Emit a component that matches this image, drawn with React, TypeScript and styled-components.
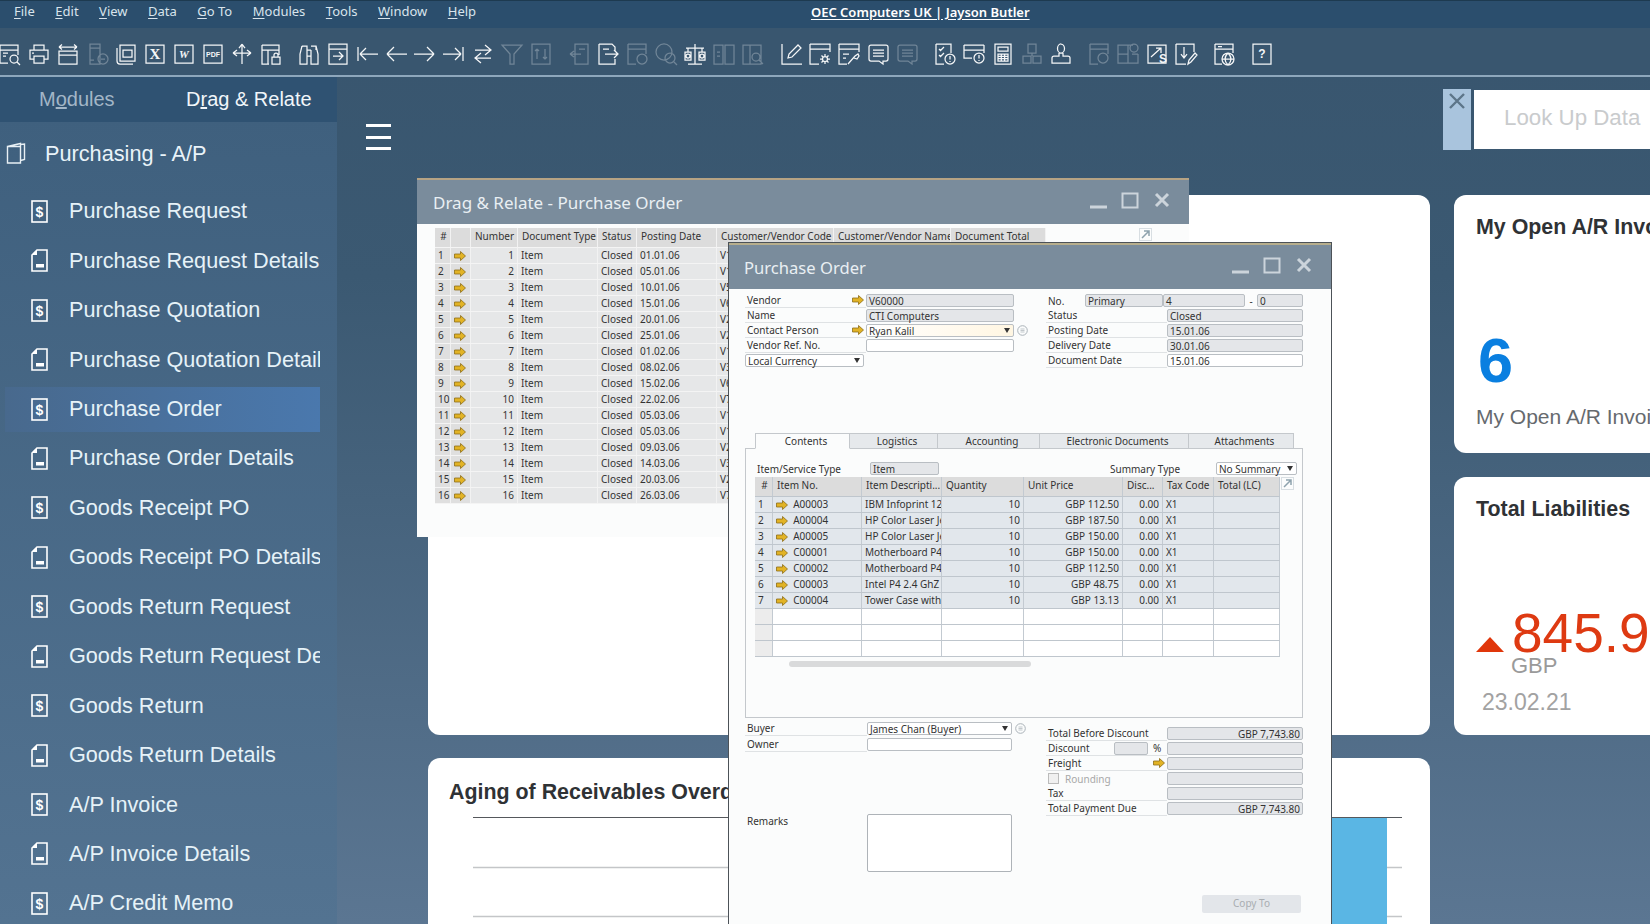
import styled, { createGlobalStyle } from "styled-components";

const GlobalStyle = createGlobalStyle`
  html, body {
    margin: 0;
    padding: 0;
    width: 1650px;
    height: 924px;
    overflow: hidden;
    background: #3a5872;
  }
  * {
    box-sizing: border-box;
  }
`;

const sans = `"Liberation Sans", Arial, sans-serif`;
const ui = `"Noto Sans", "Open Sans", sans-serif`;

const Page = styled.div`
  position: relative;
  width: 1650px;
  height: 924px;
  overflow: hidden;
  display: flex;
  flex-direction: column;
  background: linear-gradient(180deg, #38556e 0%, #3b5972 30%, #5b7692 100%);
  font-family: ${sans};
`;

const MenuBar = styled.div`
  height: 28px;
  flex: none;
  display: flex;
  align-items: center;
  padding: 0 0 7px 14px;
  border-top: 1px solid #1d3a50;
  background: #2b4e6d;
  font-family: ${ui};
  font-size: 13px;
  color: #d9e4ec;
`;

const MenuItem = styled.span`
  margin-right: 20.5px;
  white-space: nowrap;
  u {
    text-underline-offset: 2px;
  }
`;

const CompanyTitle = styled.span`
  position: relative;
  top: 1px;
  margin-left: 314.3px;
  font-weight: 600;
  font-size: 13px;
  color: #ffffff;
  text-decoration: underline;
  text-underline-offset: 2px;
  white-space: nowrap;
`;

const Toolbar = styled.div`
  height: 49px;
  flex: none;
  display: flex;
  align-items: center;
  padding: 5px 0 0 0;
  margin-left: -2px;
  background: #39566f;
  border-bottom: 2px solid #8ea7bc;
`;

const ToolGroup = styled.div`
  display: flex;
  gap: 5px;
  margin-right: 14px;
`;

const ToolSvg = styled.svg<{ $dim?: boolean }>`
  width: 24px;
  height: 24px;
  flex: none;
  fill: none;
  stroke: #ffffff;
  stroke-width: 1.25;
  opacity: ${({ $dim }) => ($dim ? 0.28 : 0.95)};
  text {
    stroke: none;
    fill: #ffffff;
  }
`;

const Content = styled.div`
  flex: 1;
  min-height: 0;
  display: flex;
`;

const Sidebar = styled.aside`
  width: 337px;
  flex: none;
  overflow: hidden;
  background: linear-gradient(180deg, #3e5f7d 0%, #537391 100%);
`;

const SideTabs = styled.div`
  height: 45px;
  display: flex;
  align-items: center;
  background: #2f5272;
  font-size: 20px;
`;

const SideTab = styled.span<{ $active?: boolean; $w: number }>`
  width: ${({ $w }) => $w}px;
  color: ${({ $active }) => ($active ? "#f1f6fa" : "#a3b6c7")};
  padding-left: 39px;
`;

const SideHeading = styled.div`
  height: 67.5px;
  display: flex;
  align-items: center;
  padding: 0 0 3px 6px;
  gap: 18px;
  font-size: 21.7px;
  color: #e9f3f9;
  svg {
    margin-top: -3px;
  }
`;

const SideList = styled.div`
  margin-left: 5px;
  width: 315px;
`;

const SideItem = styled.div<{ $active?: boolean }>`
  height: 45px;
  margin-bottom: 4.45px;
  display: flex;
  align-items: center;
  padding: 0 0 1.5px 26px;
  gap: 21px;
  font-size: 21.65px;
  color: #e6f2f8;
  white-space: nowrap;
  overflow: hidden;
  background: ${({ $active }) =>
    $active ? "linear-gradient(90deg, #48698d 0%, #4a78ad 100%)" : "transparent"};
`;

const SideIcon = styled.svg`
  width: 17px;
  height: 23px;
  flex: none;
  text {
    fill: #fff;
  }
`;

const Main = styled.main`
  flex: 1;
  min-width: 0;
  overflow: hidden;
`;

const TopRow = styled.div`
  height: 118px;
  display: flex;
  align-items: flex-start;
  padding-left: 29px;
`;

const Hamburger = styled.div`
  width: 25px;
  margin-top: 47px;
  flex: none;
  display: flex;
  flex-direction: column;
  gap: 8.5px;
  span {
    height: 3px;
    background: #ffffff;
  }
`;

const LookUpClose = styled.div`
  width: 28px;
  height: 61px;
  margin: 12px 0 0 1052px;
  flex: none;
  display: flex;
  justify-content: center;
  padding-top: 3px;
  background: #a9c4dd;
  svg {
    width: 18px;
    height: 18px;
  }
`;

const LookUpBox = styled.div`
  width: 230px;
  height: 59px;
  margin: 13px 0 0 3px;
  flex: none;
  padding-left: 30px;
  line-height: 56px;
  font-size: 22.3px;
  color: #c9cbcd;
  background: #ffffff;
`;

const CardGrid = styled.div`
  display: grid;
  grid-template-columns: 1002px 300px;
  grid-template-rows: 258px 258px 200px;
  column-gap: 24px;
  row-gap: 24px;
  margin-left: 91px;
`;

const Card = styled.section`
  background: #ffffff;
  border-radius: 12px;
  overflow: hidden;
  white-space: nowrap;
`;

const WideCard = styled(Card)`
  grid-row: span 2;
`;

const ChartCard = styled(Card)`
  margin-top: -1px;
  height: 220px;
`;

const KpiCard = styled(Card)`
  padding-left: 22px;
`;

const CardTitle = styled.h2<{ $h?: number }>`
  margin: 0;
  height: ${({ $h }) => $h ?? 64}px;
  line-height: ${({ $h }) => $h ?? 64}px;
  font-size: 21.4px;
  font-weight: 700;
  color: #2f3235;
`;

const ChartTitle = styled(CardTitle)`
  padding-left: 21px;
`;

const ChartArea = styled.svg`
  display: block;
  width: 1002px;
  height: 120px;
  margin-top: -9px;
`;

const BigNumber = styled.div`
  margin: 71px 0 0 2px;
  height: 60px;
  line-height: 60px;
  font-size: 63px;
  font-weight: 700;
  color: #0a7fe0;
`;

const KpiCaption = styled.div`
  margin-top: 15px;
  line-height: 24px;
  font-size: 21px;
  color: #666a6e;
`;

const TrendRow = styled.div`
  margin-top: 69px;
  height: 46px;
  display: flex;
  align-items: center;
  gap: 8px;
`;

const TrendUp = styled.div`
  width: 0;
  height: 0;
  margin-top: 23px;
  border-left: 14px solid transparent;
  border-right: 14px solid transparent;
  border-bottom: 15px solid #e0360a;
`;

const TrendValue = styled.span`
  font-size: 55px;
  line-height: 46px;
  color: #de3a12;
`;

const TrendUnit = styled.div`
  margin: 0 0 0 35px;
  line-height: 20px;
  font-size: 22px;
  color: #9a9a9a;
`;

const TrendDate = styled.div`
  margin: 13px 0 0 6px;
  line-height: 26px;
  font-size: 23px;
  color: #a2a2a2;
`;

/* windows sit on the desktop, so these two are placed by coordinates */
const Win = styled.div<{ $x: number; $y: number; $w: number; $h: number }>`
  position: absolute;
  left: ${({ $x }) => $x}px;
  top: ${({ $y }) => $y}px;
  width: ${({ $w }) => $w}px;
  height: ${({ $h }) => $h}px;
  background: #fbfcfc;
  border-top: 2px solid #b6a384;
  font-family: ${ui};
  font-size: 10px;
  color: #333;
`;

const DocWin = styled(Win)`
  box-shadow: 0 0 0 1px #4c5258;
  border-top-color: #b7ae8c;
`;

const WinBar = styled.div`
  height: 44px;
  display: flex;
  align-items: center;
  padding: 0 19px 0 16px;
  background: #7a8c9c;
`;

const WinTitle = styled.div<{ $size: number; $ml?: number }>`
  flex: 1;
  margin-left: ${({ $ml }) => $ml ?? 0}px;
  font-size: ${({ $size }) => $size}px;
  color: #e9eff3;
  white-space: nowrap;
`;

const WinControls = styled.svg`
  width: 80px;
  height: 24px;
  flex: none;
  margin-bottom: 3px;
  fill: none;
  stroke: #ccd4db;
`;

const DragBody = styled.div`
  display: flex;
  padding: 4px 0 0 18px;
  gap: 93px;
`;

const GridTable = styled.div<{ $w: number }>`
  width: ${({ $w }) => $w}px;
  flex: none;
  overflow: hidden;
`;

const GridRow = styled.div<{ $cols: string; $h?: number; $head?: boolean; $blank?: boolean }>`
  display: grid;
  grid-template-columns: ${({ $cols }) => $cols};
  height: ${({ $h }) => $h ?? 16}px;
  line-height: 15px;
  background: ${({ $head, $blank }) =>
    $head ? "#dcdcdc" : $blank ? "#ffffff" : "#e6e7e8"};
  border-bottom: 1px solid ${({ $blank }) => ($blank ? "#c6c9cc" : "#f4f4f4")};
`;

const LineRow = styled(GridRow)`
  background: ${({ $head, $blank }) =>
    $head ? "#dcdcdc" : $blank ? "#ffffff" : "#e2e7ec"};
  border-bottom-color: #bfc6cd;
`;

const GridCell = styled.div<{ $right?: boolean; $center?: boolean; $shade?: boolean; $head?: boolean }>`
  padding: ${({ $head }) => ($head ? "0 2px 3px 4px" : "0 3px")};
  overflow: hidden;
  white-space: nowrap;
  display: flex;
  align-items: center;
  justify-content: ${({ $right, $center }) =>
    $right ? "flex-end" : $center ? "center" : "flex-start"};
  border-right: 1px solid #f2f2f2;
  background: ${({ $shade }) => ($shade ? "#dfdfdf" : "transparent")};
`;

const LineCell = styled(GridCell)`
  border-right-color: #c3cad1;
  background: ${({ $shade }) => ($shade ? "#ececec" : "transparent")};
`;

const Arrow = styled.svg`
  width: 12px;
  height: 10px;
  flex: none;
`;

const ExpandIcon = styled.svg`
  width: 13px;
  height: 13px;
  flex: none;
  fill: none;
  stroke: #8ea2ad;
`;

const DocBody = styled.div`
  padding: 4px 28px 0 16px;
`;

const HeadBlock = styled.div`
  height: 140px;
  display: flex;
  justify-content: space-between;
`;

const LeftCol = styled.div`
  width: 290px;
`;

const RightCol = styled.div`
  width: 257px;
`;

const FormRow = styled.div<{ $cols: string; $h?: number }>`
  display: grid;
  grid-template-columns: ${({ $cols }) => $cols};
  align-items: center;
  height: ${({ $h }) => $h ?? 15}px;
`;

const FieldLabel = styled.div`
  height: 100%;
  display: flex;
  align-items: center;
  justify-content: space-between;
  padding: 0 2px 0 2px;
  border-bottom: 1px solid #dfe2e4;
  white-space: nowrap;
`;

const Field = styled.div<{ $tone?: "grey" | "white" | "amber"; $w?: number; $right?: boolean }>`
  position: relative;
  width: ${({ $w }) => ($w ? `${$w}px` : "100%")};
  height: 13px;
  flex: none;
  padding: 0 2px;
  line-height: 12px;
  white-space: nowrap;
  text-align: ${({ $right }) => ($right ? "right" : "left")};
  border: 1px solid #b9bec3;
  border-radius: 2px;
  background: ${({ $tone }) =>
    $tone === "grey" ? "#e4e6e9" : $tone === "amber" ? "linear-gradient(90deg,#fff,#fff6e2)" : "#ffffff"};
`;

const Caret = styled.span`
  position: absolute;
  right: 3px;
  top: 3px;
  width: 0;
  height: 0;
  border-left: 3.5px solid transparent;
  border-right: 3.5px solid transparent;
  border-top: 5px solid #333;
`;

const Dots = styled.svg`
  width: 11px;
  height: 11px;
  margin-left: 3px;
  fill: none;
  stroke: #aab2b8;
`;

const NoRow = styled.div`
  display: flex;
  align-items: center;
  height: 15px;
`;

const NoLabel = styled.span`
  width: 39px;
  padding-left: 2px;
`;

const Dash = styled.span`
  width: 12px;
  text-align: center;
`;

const TabStrip = styled.div`
  display: flex;
  margin-left: 10px;
  height: 16px;
  position: relative;
  z-index: 1;
`;

const Tab = styled.div<{ $w: number; $active?: boolean }>`
  width: ${({ $w }) => $w}px;
  padding-left: 7px;
  line-height: 15px;
  text-align: center;
  border: 1px solid #c4c8cc;
  border-left-width: ${({ $active }) => ($active ? 1 : 0)}px;
  border-bottom-color: ${({ $active }) => ($active ? "#fbfcfc" : "#c4c8cc")};
  background: ${({ $active }) => ($active ? "#fbfcfc" : "#e6e9ec")};
`;

const Panel = styled.div`
  height: 270px;
  margin-top: -1px;
  padding: 12px 4px 0 9px;
  border: 1px solid #c4c8cc;
`;

const TypeRow = styled.div`
  display: flex;
  align-items: center;
  height: 15px;
  margin-bottom: 1px;
  padding-left: 2px;
`;

const TypeLabel = styled.span<{ $w: number; $ml?: number }>`
  width: ${({ $w }) => $w}px;
  margin-left: ${({ $ml }) => $ml ?? 0}px;
  flex: none;
`;

const TableRow = styled.div`
  display: flex;
  gap: 1px;
`;

const ScrollThumb = styled.div`
  width: 242px;
  height: 6px;
  margin: 4px 0 0 34px;
  border-radius: 3px;
  background: #d9dadb;
`;

const BottomBlock = styled.div`
  height: 177px;
  padding-top: 3px;
  display: flex;
  justify-content: space-between;
`;

const BuyerCol = styled.div`
  width: 285px;
`;

const RemarksRow = styled.div`
  display: grid;
  grid-template-columns: 122px 145px;
  margin-top: 62px;
`;

const RemarksLabel = styled.div`
  padding-left: 2px;
`;

const RemarksBox = styled.div`
  height: 58px;
  background: #fff;
  border: 1px solid #aeb3b8;
  border-radius: 2px;
`;

const TotalsCol = styled.div`
  width: 257px;
  padding-top: 5px;
`;

const DiscountLabel = styled(FieldLabel)`
  justify-content: flex-start;
`;

const DiscountName = styled.span`
  width: 66px;
`;

const Pct = styled.span`
  margin-left: 5px;
`;

const RoundingLabel = styled(FieldLabel)`
  justify-content: flex-start;
  gap: 6px;
  color: #a8a8a8;
  border-bottom: none;
`;

const Check = styled.span`
  width: 11px;
  height: 11px;
  border: 1px solid #bbb;
  background: #f0f0f0;
`;

const CopyTo = styled.div`
  width: 99px;
  height: 18px;
  margin: 0 2px 0 auto;
  line-height: 17px;
  text-align: center;
  color: #a9adb1;
  background: #e3e6ea;
  border-radius: 2px;
`;

type Tool = {
  d: string;
  dim?: boolean;
  label?: string;
  size?: number;
  italic?: boolean;
  serif?: boolean;
  lx?: number;
  ly?: number;
};

const circle = (cx: number, cy: number, r: number) =>
  `M${cx - r} ${cy}a${r} ${r} 0 1 0 ${r * 2} 0a${r} ${r} 0 1 0-${r * 2} 0`;

const chat = "M5 3h15a2 2 0 0 1 2 2v12a2 2 0 0 1-2 2h-3v3l-4-3H5a2 2 0 0 1-2-2V5a2 2 0 0 1 2-2zM7 8h11M7 11h11M7 14h11";

const toolGroups: Tool[][] = [
  [
    { d: `M2 3h18v10M2 3v18h8M2 8h18M5 11h5M5 14h3${circle(16, 17, 4)}M19 20l3 3` },
    { d: "M7 8V3h10v5M7 17H3V8h18v9h-4M7 14h10v7H7zM5 11h2" },
    { d: "M3 9h18v13H3zM3 13h18M3 5h18M3 5l3-2.5M3 5l3 2.5M21 5l-3-2.5M21 5l-3 2.5" },
    { d: `M5 2h10v20H5zM5 6h10M5 18h4${circle(18, 17, 5)}M16 17h4`, dim: true },
    { d: "M3 6v13a3 3 0 0 0 3 3h13M6 3h15v16H6zM9 8h9v7H9z" },
    { d: "M3 3h18v18H3z", label: "X", size: 15, serif: true },
    { d: "M3 3h18v18H3z", label: "W", size: 11, italic: true, serif: true },
    { d: "M3 3h18v18H3z", label: "PDF", size: 7 },
    { d: "M12 2v20M3 11h18M12 2l-3 4M12 2l3 4M3 11l4-3M3 11l4 3M21 11l-4-3M21 11l-4 3" },
    { d: "M3 3h17v10M3 3v19h7M3 8h17M9 8v14M13 15h8v7h-8zM15 15v-2a2 2 0 0 1 4 0v2" },
  ],
  [
    { d: "M5 4h5v4M14 4h5v4M10 8h4M5 4L3 12v10h7V8M19 4l2 8v10h-7V8M10 14h4" },
    { d: "M3 2h18v20H3zM3 7h18M7 14h10M13 10l4 4-4 4" },
    { d: "M3 5v14M5 12h18M5 12l6-6M5 12l6 6" },
    { d: "M3 12h20M3 12l7-7M3 12l7 7" },
    { d: "M1 12h20M21 12l-7-7M21 12l-7 7" },
    { d: "M1 12h18M19 12l-6-6M19 12l-6 6M21 5v14" },
    { d: "M4 8h16M14 3l6 5-6 5M20 16H4M10 11l-6 5 6 5" },
    { d: "M2 3h20l-8 9v10h-4V12z", dim: true },
    { d: "M3 2h18v20H3zM8 7v10M8 7L6 9M8 7l2 2M16 17V7M16 17l-2-2M16 17l2-2", dim: true },
  ],
  [
    { d: "M8 2h13v20H8zM3 12h11M3 12l4-3M3 12l4 3M12 7h6", dim: true },
    { d: "M3 2h13l3 3v5M3 2v20h16v-5M9 12h13M18 8l4 4-4 4M7 7h6" },
    { d: `M3 2h18v10M3 2v20h8M3 7h18${circle(17, 17, 5)}`, dim: true },
    { d: `${circle(10, 10, 8)}${circle(16, 16, 5)}M20 20l3 3`, dim: true },
    { d: `M12 2v20M5 22h14M3 6h18M5 6v4M19 6v4M2 10h6v8H2zM16 10h6v8h-6z${circle(5, 14, 2)}${circle(19, 14, 2)}` },
    { d: "M2 3h9v19H2zM13 3h9v19h-9zM5 10h3M5 14h3", dim: true },
    { d: `M2 3h18v19H2zM9 3v19${circle(15, 15, 4)}M18 18l4 4`, dim: true },
  ],
  [
    { d: "M3 2v20h20M9 16l1-4L19 3l3 3-9 9z" },
    { d: `M2 2h20v8M2 2v20h9M2 7h20${circle(17, 17, 2.5)}M17 12v2M17 20v2M12 17h2M20 17h2M13.5 13.5l1.5 1.5M19 19l1.5 1.5M13.5 20.5l1.5-1.5M19 15l1.5-1.5` },
    { d: "M2 2h20v8M2 2v20h8M2 7h20M11 22l7-8 3-2 1 2-2 3-3-1M6 12h6M6 16h3" },
    { d: chat },
    { d: chat, dim: true },
  ],
  [
    { d: `M3 2h15v9M3 2v20h8M6 7l1.5 1.5L11 5M6 13l1.5 1.5L11 11${circle(17, 17, 5)}M17 14v3.5M17 19v1` },
    { d: `M2 3h20M2 3v13h8M22 3v8M2 8h20${circle(17, 16, 5)}M17 13v3.5M17 18v1` },
    { d: "M4 2h16v20H4zM7 5h10v4H7zM7 12h10v7H7zM7 14.3h10M7 16.6h10M10.3 12v7M13.6 12v7" },
    { d: "M8 2h8v9H8zM3 14h8v7H3zM13 14h8v7h-8zM12 11v3", dim: true },
    { d: "M12 2a3.5 4.5 0 0 1 0 9 3.5 4.5 0 0 1 0-9zM10 11v3H5a2 2 0 0 0-2 2v5h18v-5a2 2 0 0 0-2-2h-5v-3" },
  ],
  [
    { d: `M3 2h18v10M3 2v20h8M3 7h18${circle(16, 16, 5)}`, dim: true },
    { d: `M2 3h10v18H2zM12 12H2M12 3h5M22 12v9H12M22 12h-6${circle(18, 6, 4)}`, dim: true },
    { d: "M3 3h18v18H3zM6 15L16 6M11 6h5v5", label: "S", size: 12, lx: 18, ly: 21 },
    { d: "M2 2h18v8M2 2v20h10M10 5v11M7 12l3 4 3-4M14 22l1-4 6-7 2 2-6 7z" },
  ],
  [{ d: `M3 2h18v9M3 2v20h7M3 7h18M6 4.5h4${circle(16, 17, 6)}M10 17h12M16 11c-4 4-4 8 0 12M16 11c4 4 4 8 0 12` }],
  [{ d: "M3 2h18v20H3z", label: "?", size: 12 }],
];

const ToolIcon = ({ tool }: { tool: Tool }) => (
  <ToolSvg viewBox="0 0 24 24" $dim={tool.dim}>
    <path d={tool.d} />
    {tool.label ? (
      <text
        x={tool.lx ?? 12}
        y={tool.ly ?? 12 + (tool.size ?? 10) * 0.36}
        textAnchor="middle"
        fontSize={tool.size}
        fontWeight="700"
        fontStyle={tool.italic ? "italic" : "normal"}
        fontFamily={tool.serif ? "Liberation Serif, serif" : "Liberation Sans, sans-serif"}
      >
        {tool.label}
      </text>
    ) : null}
  </ToolSvg>
);

const LinkArrow = () => (
  <Arrow viewBox="0 0 12 10">
    <path
      d="M.5 3h6V.5L11.5 5l-5 4.5V7h-6z"
      fill="#e2b325"
      stroke="#8d6d16"
      strokeWidth="0.8"
    />
  </Arrow>
);

const Expand = () => (
  <ExpandIcon viewBox="0 0 13 13">
    <rect x="0.5" y="0.5" width="12" height="12" stroke="#d8dee2" />
    <path d="M3 10L10 3M5 3h5v5" strokeWidth="1.5" />
  </ExpandIcon>
);

const DollarDoc = () => (
  <SideIcon viewBox="0 0 17 23">
    <rect x="1" y="1" width="15" height="21" fill="none" stroke="#fff" strokeWidth="1.6" />
    <text x="8.5" y="16.5" textAnchor="middle" fontSize="14" fontWeight="700" fontFamily="Liberation Sans, sans-serif">
      $
    </text>
  </SideIcon>
);

const DetailDoc = () => (
  <SideIcon viewBox="0 0 17 23">
    <path d="M6 1h10v21H1V6z" fill="none" stroke="#fff" strokeWidth="1.6" />
    <path d="M6 1v5H1z" fill="#fff" />
    <rect x="5" y="15" width="8" height="3.5" fill="#fff" />
  </SideIcon>
);

const BookIcon = () => (
  <svg width="21" height="22" viewBox="0 0 21 22" fill="none" stroke="#e8f0f5" strokeWidth="1.4">
    <path d="M1.5 4.5l13-3v3M1.5 4.5h13v16.5h-13zM14.5 18.5l4-1V2l-4 .5" />
  </svg>
);

const WindowButtons = () => (
  <WinControls viewBox="0 0 80 24">
    <path d="M0 18h17" strokeWidth="3" />
    <rect x="32.5" y="4.5" width="15" height="14" strokeWidth="2" />
    <path d="M66 5l12 12M78 5L66 17" strokeWidth="3" />
  </WinControls>
);

const dots = (
  <Dots viewBox="0 0 11 11">
    <circle cx="5.5" cy="5.5" r="4.8" />
    <path d="M3.5 4h4M3.5 5.5h4M3.5 7h4" strokeWidth="0.7" />
  </Dots>
);

const menus: [string, string][] = [
  ["F", "ile"],
  ["E", "dit"],
  ["V", "iew"],
  ["D", "ata"],
  ["G", "o To"],
  ["M", "odules"],
  ["T", "ools"],
  ["W", "indow"],
  ["H", "elp"],
];

const sideItems = [
  "Purchase Request",
  "Purchase Request Details",
  "Purchase Quotation",
  "Purchase Quotation Details",
  "Purchase Order",
  "Purchase Order Details",
  "Goods Receipt PO",
  "Goods Receipt PO Details",
  "Goods Return Request",
  "Goods Return Request Details",
  "Goods Return",
  "Goods Return Details",
  "A/P Invoice",
  "A/P Invoice Details",
  "A/P Credit Memo",
];

const dragCols = "16px 20px 47px 80px 39px 80px 117px 117px 95px";
const dragRows = [
  ["01.01.06", "V10000"],
  ["05.01.06", "V10000"],
  ["10.01.06", "V50000"],
  ["15.01.06", "V60000"],
  ["20.01.06", "V20000"],
  ["25.01.06", "V20000"],
  ["01.02.06", "V10000"],
  ["08.02.06", "V30000"],
  ["15.02.06", "V60000"],
  ["22.02.06", "V70000"],
  ["05.03.06", "V10000"],
  ["05.03.06", "V10000"],
  ["09.03.06", "V20000"],
  ["14.03.06", "V30000"],
  ["20.03.06", "V20000"],
  ["26.03.06", "V70000"],
];

const lineCols = "18px 89px 80px 82px 99px 40px 51px 66px";
const lineRows = [
  ["A00003", "IBM Infoprint 1222", "GBP 112.50"],
  ["A00004", "HP Color Laser Jet 5", "GBP 187.50"],
  ["A00005", "HP Color Laser Jet 4", "GBP 150.00"],
  ["C00001", "Motherboard P4 Turbo", "GBP 150.00"],
  ["C00002", "Motherboard P4 Turbo", "GBP 112.50"],
  ["C00003", "Intel P4 2.4 GhZ", "GBP 48.75"],
  ["C00004", "Tower Case with", "GBP 13.13"],
];

const tabs: [string, number][] = [
  ["Contents", 95],
  ["Logistics", 88],
  ["Accounting", 102],
  ["Electronic Documents", 149],
  ["Attachments", 105],
];

const totals: [string, string][] = [["Tax", ""], ["Total Payment Due", "GBP 7,743.80"]];

const App = () => {
  return (
    <Page>
      <GlobalStyle />
      <MenuBar>
        {menus.map(([key, rest]) => (
          <MenuItem key={key}>
            <u>{key}</u>
            {rest}
          </MenuItem>
        ))}
        <CompanyTitle>OEC Computers UK | Jayson Butler</CompanyTitle>
      </MenuBar>
      <Toolbar>
        {toolGroups.map((group, g) => (
          <ToolGroup key={g}>
            {group.map((tool, i) => (
              <ToolIcon key={i} tool={tool} />
            ))}
          </ToolGroup>
        ))}
      </Toolbar>
      <Content>
        <Sidebar>
          <SideTabs>
            <SideTab $w={147}>
              M<u>o</u>dules
            </SideTab>
            <SideTab $active $w={190}>
              D<u>r</u>ag &amp; Relate
            </SideTab>
          </SideTabs>
          <SideHeading>
            <BookIcon />
            Purchasing - A/P
          </SideHeading>
          <SideList>
            {sideItems.map((item, i) => (
              <SideItem key={item} $active={item === "Purchase Order"}>
                {i % 2 === 0 ? <DollarDoc /> : <DetailDoc />}
                {item}
              </SideItem>
            ))}
          </SideList>
        </Sidebar>
        <Main>
          <TopRow>
            <Hamburger>
              <span />
              <span />
              <span />
            </Hamburger>
            <LookUpClose>
              <svg viewBox="0 0 18 18" fill="none" stroke="#5d7589" strokeWidth="2.4">
                <path d="M2 2l14 14M16 2L2 16" />
              </svg>
            </LookUpClose>
            <LookUpBox>Look Up Data</LookUpBox>
          </TopRow>
          <CardGrid>
            <WideCard />
            <KpiCard>
              <CardTitle>My Open A/R Invoices</CardTitle>
              <BigNumber>6</BigNumber>
              <KpiCaption>My Open A/R Invoices</KpiCaption>
            </KpiCard>
            <KpiCard>
              <CardTitle>Total Liabilities</CardTitle>
              <TrendRow>
                <TrendUp />
                <TrendValue>845.9</TrendValue>
              </TrendRow>
              <TrendUnit>GBP</TrendUnit>
              <TrendDate>23.02.21</TrendDate>
            </KpiCard>
            <ChartCard>
              <ChartTitle $h={68}>Aging of Receivables Overdue</ChartTitle>
              <ChartArea viewBox="0 0 1002 120">
                <rect x="904" y="0" width="55" height="120" fill="#5ab6e4" />
                <path d="M45 0.5h929" stroke="#55585c" fill="none" />
                <path d="M45 50.5h859M959 50.5h15M45 99.5h859M959 99.5h15" stroke="#c4c6c8" strokeWidth="1.5" fill="none" />
              </ChartArea>
            </ChartCard>
          </CardGrid>
        </Main>
      </Content>

      <Win $x={417} $y={178} $w={772} $h={359}>
        <WinBar>
          <WinTitle $size={17}>Drag &amp; Relate - Purchase Order</WinTitle>
          <WindowButtons />
        </WinBar>
        <DragBody>
          <GridTable $w={611}>
            <GridRow $cols={dragCols} $head $h={20}>
              {["#", "", "Number", "Document Type", "Status", "Posting Date", "Customer/Vendor Code", "Customer/Vendor Name", "Document Total"].map(
                (h) => (
                  <GridCell key={h} $head $center={h === "#"}>
                    {h}
                  </GridCell>
                )
              )}
            </GridRow>
            {dragRows.map(([date, code], i) => (
              <GridRow key={i} $cols={dragCols}>
                <GridCell $shade>{i + 1}</GridCell>
                <GridCell $shade>
                  <LinkArrow />
                </GridCell>
                <GridCell $right>{i + 1}</GridCell>
                <GridCell>Item</GridCell>
                <GridCell>Closed</GridCell>
                <GridCell>{date}</GridCell>
                <GridCell>{code}</GridCell>
                <GridCell />
                <GridCell />
              </GridRow>
            ))}
          </GridTable>
          <Expand />
        </DragBody>
      </Win>

      <DocWin $x={729} $y={243} $w={602} $h={681}>
        <WinBar>
          <WinTitle $size={16.6} $ml={-1}>Purchase Order</WinTitle>
          <WindowButtons />
        </WinBar>
        <DocBody>
          <HeadBlock>
            <LeftCol>
              <FormRow $cols="121px 148px auto">
                <FieldLabel>
                  Vendor
                  <LinkArrow />
                </FieldLabel>
                <Field $tone="grey">V60000</Field>
              </FormRow>
              <FormRow $cols="121px 148px auto">
                <FieldLabel>Name</FieldLabel>
                <Field $tone="grey">CTI Computers</Field>
              </FormRow>
              <FormRow $cols="121px 148px auto">
                <FieldLabel>
                  Contact Person
                  <LinkArrow />
                </FieldLabel>
                <Field $tone="amber">
                  Ryan Kalil
                  <Caret />
                </Field>
                {dots}
              </FormRow>
              <FormRow $cols="121px 148px auto">
                <FieldLabel>Vendor Ref. No.</FieldLabel>
                <Field />
              </FormRow>
              <FormRow $cols="119px">
                <Field>
                  Local Currency
                  <Caret />
                </Field>
              </FormRow>
            </LeftCol>
            <RightCol>
              <NoRow>
                <NoLabel>No.</NoLabel>
                <Field $tone="grey" $w={78}>
                  Primary
                </Field>
                <Field $tone="grey" $w={82}>
                  4
                </Field>
                <Dash>-</Dash>
                <Field $tone="grey" $w={46}>
                  0
                </Field>
              </NoRow>
              <FormRow $cols="121px 136px">
                <FieldLabel>Status</FieldLabel>
                <Field $tone="grey">Closed</Field>
              </FormRow>
              <FormRow $cols="121px 136px">
                <FieldLabel>Posting Date</FieldLabel>
                <Field $tone="grey">15.01.06</Field>
              </FormRow>
              <FormRow $cols="121px 136px">
                <FieldLabel>Delivery Date</FieldLabel>
                <Field $tone="grey">30.01.06</Field>
              </FormRow>
              <FormRow $cols="121px 136px">
                <FieldLabel>Document Date</FieldLabel>
                <Field>15.01.06</Field>
              </FormRow>
            </RightCol>
          </HeadBlock>
          <TabStrip>
            {tabs.map(([name, w], i) => (
              <Tab key={name} $w={w} $active={i === 0}>
                {name}
              </Tab>
            ))}
          </TabStrip>
          <Panel>
            <TypeRow>
              <TypeLabel $w={113}>Item/Service Type</TypeLabel>
              <Field $tone="grey" $w={69}>
                Item
              </Field>
              <TypeLabel $w={106} $ml={171}>
                Summary Type
              </TypeLabel>
              <Field $w={81}>
                No Summary
                <Caret />
              </Field>
            </TypeRow>
            <TableRow>
              <GridTable $w={525}>
                <LineRow $cols={lineCols} $h={20} $head>
                  {["#", "Item No.", "Item Descripti...", "Quantity", "Unit Price", "Disc...", "Tax Code", "Total (LC)"].map((h) => (
                    <LineCell key={h} $head $center={h === "#"}>
                      {h}
                    </LineCell>
                  ))}
                </LineRow>
                {lineRows.map(([code, desc, price], i) => (
                  <LineRow key={code} $cols={lineCols}>
                    <LineCell>{i + 1}</LineCell>
                    <LineCell>
                      <LinkArrow />
                      &nbsp;&nbsp;{code}
                    </LineCell>
                    <LineCell>{desc}</LineCell>
                    <LineCell $right>10</LineCell>
                    <LineCell $right>{price}</LineCell>
                    <LineCell $right>0.00</LineCell>
                    <LineCell>X1</LineCell>
                    <LineCell />
                  </LineRow>
                ))}
                {[0, 1, 2].map((i) => (
                  <LineRow key={i} $cols={lineCols} $blank>
                    <LineCell $shade />
                    <LineCell />
                    <LineCell />
                    <LineCell />
                    <LineCell />
                    <LineCell />
                    <LineCell />
                    <LineCell />
                  </LineRow>
                ))}
              </GridTable>
              <Expand />
            </TableRow>
            <ScrollThumb />
          </Panel>
          <BottomBlock>
            <BuyerCol>
              <FormRow $cols="122px 145px auto">
                <FieldLabel>Buyer</FieldLabel>
                <Field>
                  James Chan (Buyer)
                  <Caret />
                </Field>
                {dots}
              </FormRow>
              <FormRow $cols="122px 145px auto" $h={16}>
                <FieldLabel>Owner</FieldLabel>
                <Field />
              </FormRow>
              <RemarksRow>
                <RemarksLabel>Remarks</RemarksLabel>
                <RemarksBox />
              </RemarksRow>
            </BuyerCol>
            <TotalsCol>
              <FormRow $cols="121px 136px">
                <FieldLabel>Total Before Discount</FieldLabel>
                <Field $tone="grey" $right>
                  GBP 7,743.80
                </Field>
              </FormRow>
              <FormRow $cols="121px 136px">
                <DiscountLabel>
                  <DiscountName>Discount</DiscountName>
                  <Field $tone="grey" $w={34} />
                  <Pct>%</Pct>
                </DiscountLabel>
                <Field $tone="grey" />
              </FormRow>
              <FormRow $cols="121px 136px">
                <FieldLabel>
                  Freight
                  <LinkArrow />
                </FieldLabel>
                <Field $tone="grey" />
              </FormRow>
              <FormRow $cols="121px 136px">
                <RoundingLabel>
                  <Check />
                  Rounding
                </RoundingLabel>
                <Field $tone="grey" />
              </FormRow>
              {totals.map(([label, value]) => (
                <FormRow key={label} $cols="121px 136px">
                  <FieldLabel>{label}</FieldLabel>
                  <Field $tone="grey" $right>
                    {value}
                  </Field>
                </FormRow>
              ))}
            </TotalsCol>
          </BottomBlock>
          <CopyTo>Copy To</CopyTo>
        </DocBody>
      </DocWin>
    </Page>
  );
};

export default App;
